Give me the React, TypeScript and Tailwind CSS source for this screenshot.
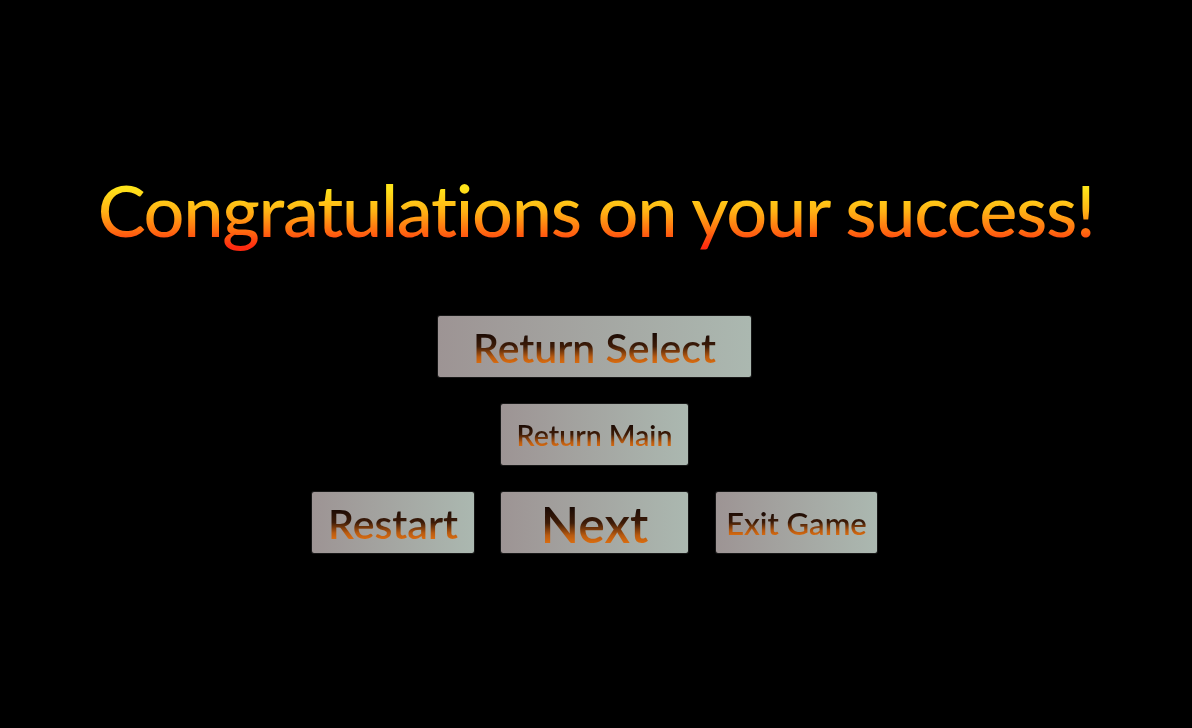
import React from "react";

const btnText =
  "bg-[linear-gradient(to_bottom,#1a0a04_22%,#3e1c08_50%,#b85a10_72%,#e07010_88%)] bg-clip-text text-transparent leading-none font-semibold [font-variant-ligatures:none]";

function Btn({
  w,
  size,
  children,
}: {
  w: string;
  size: string;
  children: React.ReactNode;
}) {
  return (
    <div
      className={`${w} h-[61px] rounded-[2px] bg-gradient-to-r from-[#9d9494] to-[#abb8b0] flex items-center justify-center shadow-[0_0_0_1px_rgba(40,40,40,0.6)]`}
    >
      <span className={`${size} ${btnText} pt-[4px] pb-[2px]`}>{children}</span>
    </div>
  );
}

export default function App() {
  return (
    <div
      className="w-[1192px] h-[728px] bg-black flex flex-col items-center"
      style={{ fontFamily: "Lato, 'Open Sans', sans-serif" }}
    >
      <h1 className="mt-[173px] text-[72px] leading-none font-medium tracking-[-1.3px] [font-variant-ligatures:none] bg-[linear-gradient(to_bottom,#ffe41a_20%,#ffb014_50%,#ff6a10_75%,#ff2a10_95%)] bg-clip-text text-transparent pb-[6px]">
        Congratulations on your success!
      </h1>
      <div className="mt-[65px] mr-[3px] flex flex-col items-center gap-[27px]">
        <Btn w="w-[313px]" size="text-[41px] tracking-[0px]">
          Return Select
        </Btn>
        <Btn w="w-[187px]" size="text-[28.5px] tracking-[0px]">
          Return Main
        </Btn>
        <div className="flex items-center">
          <Btn w="w-[162px]" size="text-[41px] tracking-[0px]">
            Restart
          </Btn>
          <div className="w-[27px]" />
          <Btn w="w-[187px]" size="text-[50px]">
            Next
          </Btn>
          <div className="w-[28px]" />
          <Btn w="w-[161px]" size="text-[31px] tracking-[0px]">
            Exit Game
          </Btn>
        </div>
      </div>
    </div>
  );
}
